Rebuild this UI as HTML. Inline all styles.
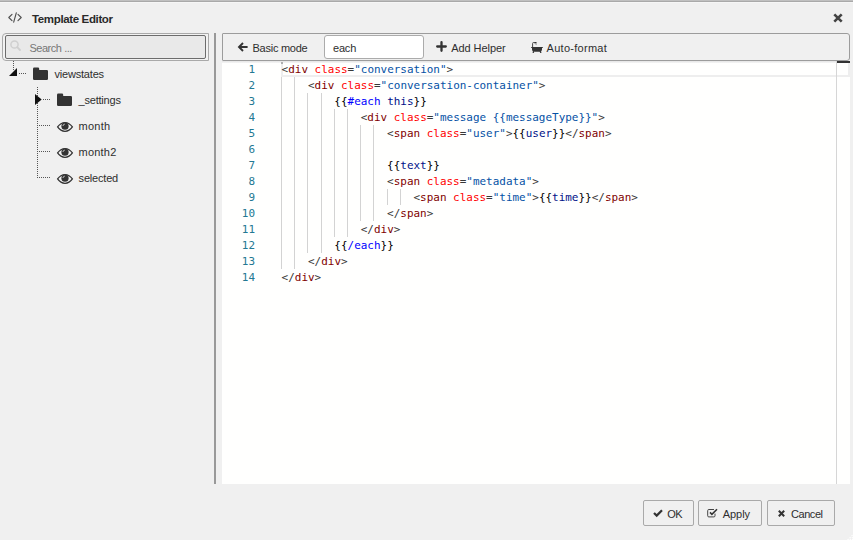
<!DOCTYPE html>
<html>
<head>
<meta charset="utf-8">
<title>Template Editor</title>
<style>
html,body{margin:0;padding:0;}
body{width:853px;height:540px;overflow:hidden;background:#f0f0f0;position:relative;
  font-family:"Liberation Sans",sans-serif;font-size:11px;color:#2e2e2e;}
.abs{position:absolute;}
#topborder{left:0;top:0;width:853px;height:3px;background:linear-gradient(#c0c0c0 0,#c0c0c0 1px,#a9a9a9 1px,#a9a9a9 2px,#f6f6f6 2px,#f6f6f6 3px);}
.t{position:absolute;white-space:nowrap;line-height:14px;height:14px;}
#title{left:32px;top:12px;font-weight:bold;font-size:11.5px;letter-spacing:-0.36px;color:#2a2a2a;}
/* search */
#searchOuter{left:2px;top:33px;width:205px;height:26px;border:1px solid #a9a9a9;border-radius:4px 0 0 4px;background:#f2f2f2;}
#searchInner{left:5px;top:35px;width:199px;height:22px;border:1px solid #6c6c6c;border-radius:2px;background:#e9e9e9;}
#searchText{left:29.5px;top:41px;color:#777;}
/* splitter */
#split{left:214px;top:33px;width:2px;height:451px;background:#999;}
/* toolbar */
#toolbar{left:222px;top:33px;width:626px;height:26px;border:1px solid #9c9c9c;border-radius:1px 3px 3px 1px;background:#f0f0f0;}
#helperInput{left:324px;top:35px;width:98px;height:22px;border:1px solid #ababab;border-radius:3px;background:#fff;}
/* editor */
#editor{left:222px;top:61px;width:628px;height:423px;background:#fffffe;overflow:hidden;
  font-family:"DejaVu Sans Mono","Liberation Mono",monospace;font-size:10.96px;}
.ln{position:absolute;margin-top:1px;left:0;width:33px;text-align:right;color:#237893;height:16px;line-height:16px;}
.cl{position:absolute;margin-top:1px;left:59.6px;height:16px;line-height:16px;white-space:pre;color:#000;}
.g{position:absolute;width:1px;background:#d3d3d3;}
.tg{color:#800000}.an{color:#ff0000}.av{color:#0451a5}.dl{color:#383838}.hb{color:#000}.kw{color:#0000ff}.vr{color:#001188}
/* tree */
.dotv{position:absolute;width:1px;background-image:linear-gradient(#555 50%,transparent 50%);background-size:1px 2px;}
.doth{position:absolute;height:1px;background-image:linear-gradient(90deg,#555 50%,transparent 50%);background-size:2px 1px;}
.tl{letter-spacing:-0.2px;color:#2e2e2e;}
/* buttons */
.btn{position:absolute;top:500px;height:24px;border:1px solid #a9a9a9;border-radius:2px;background:#f0f0f0;}
svg{position:absolute;overflow:visible;}
</style>
</head>
<body>
<div id="topborder" class="abs"></div>

<!-- title -->
<svg style="left:8px;top:12px" width="14" height="11" viewBox="0 0 14 11"><g fill="none" stroke="#505050" stroke-width="1.15" stroke-linecap="round" stroke-linejoin="round"><path d="M4 2.3 L0.8 5.5 L4 8.7"/><path d="M10 2.3 L13.2 5.5 L10 8.7"/><path d="M8.3 0.8 L5.7 10.2"/></g></svg>
<div id="title" class="t">Template Editor</div>
<svg style="left:832.6px;top:13.4px" width="10" height="10" viewBox="0 0 10 10"><path d="M1.3 1.3 L8.7 8.7 M8.7 1.3 L1.3 8.7" stroke="#444" stroke-width="2.6" stroke-linecap="butt" fill="none"/></svg>

<!-- search -->
<div id="searchOuter" class="abs"></div>
<div id="searchInner" class="abs"></div>
<svg style="left:10px;top:40px" width="11" height="11" viewBox="0 0 11 11"><circle cx="4.5" cy="4.5" r="3.6" fill="none" stroke="#cfcfcf" stroke-width="1.5"/><path d="M7.2 7.2 L10 10" stroke="#cfcfcf" stroke-width="1.8" stroke-linecap="round"/></svg>
<div id="searchText" class="t"><span id="sA" style="letter-spacing:-0.52px">Search</span> <span id="sB" style="letter-spacing:-0.55px">...</span></div>

<!-- tree -->
<div class="dotv" style="left:13px;top:61px;height:9px"></div>
<svg style="left:9px;top:67.5px" width="8" height="8" viewBox="0 0 8 8"><path d="M8 0 L8 8 L0 8 Z" fill="#111"/></svg>
<div class="doth" style="left:19px;top:73px;width:7px"></div>
<svg class="folder" style="left:33px;top:68px" width="15" height="12" viewBox="0 0 15 12"><path d="M1.3 -0.4 H5 Q6.2 -0.4 6.2 0.8 V1.9 H13.7 Q15 1.9 15 3.1 V10.8 Q15 12 13.7 12 H1.3 Q0 12 0 10.8 V0.9 Q0 -0.4 1.3 -0.4 Z" fill="#333"/></svg>
<div class="t tl" style="left:54.5px;top:67px">viewstates</div>

<div class="dotv" style="left:37px;top:87px;height:91px"></div>
<svg style="left:34.8px;top:94px" width="7" height="11" viewBox="0 0 7 11"><path d="M0 0 L6.7 5.5 L0 11 Z" fill="#111"/></svg>
<div class="doth" style="left:43px;top:99px;width:7px"></div>
<svg class="folder" style="left:57px;top:94px" width="15" height="12" viewBox="0 0 15 12"><path d="M1.3 -0.4 H5 Q6.2 -0.4 6.2 0.8 V1.9 H13.7 Q15 1.9 15 3.1 V10.8 Q15 12 13.7 12 H1.3 Q0 12 0 10.8 V0.9 Q0 -0.4 1.3 -0.4 Z" fill="#333"/></svg>
<div class="t tl" style="left:78.5px;top:93px">_settings</div>

<div class="doth" style="left:39px;top:125px;width:11px"></div>
<svg class="eye" style="left:56.5px;top:121px" width="16" height="11" viewBox="0 0 16 11"><path d="M0.6 5.9 Q3.6 1.5 8 1.5 Q12.4 1.5 15.4 5.9 Q12.4 10.3 8 10.3 Q3.6 10.3 0.6 5.9 Z" fill="none" stroke="#333" stroke-width="1.25"/><circle cx="8" cy="5.2" r="3.6" fill="#333"/><path d="M5.9 5 Q6.1 3.3 7.8 3.1" stroke="#f0f0f0" stroke-width="0.75" fill="none"/></svg>
<div class="t tl" style="left:78.6px;top:119px;letter-spacing:0.25px">month</div>

<div class="doth" style="left:39px;top:151px;width:11px"></div>
<svg class="eye" style="left:56.5px;top:147px" width="16" height="11" viewBox="0 0 16 11"><path d="M0.6 5.9 Q3.6 1.5 8 1.5 Q12.4 1.5 15.4 5.9 Q12.4 10.3 8 10.3 Q3.6 10.3 0.6 5.9 Z" fill="none" stroke="#333" stroke-width="1.25"/><circle cx="8" cy="5.2" r="3.6" fill="#333"/><path d="M5.9 5 Q6.1 3.3 7.8 3.1" stroke="#f0f0f0" stroke-width="0.75" fill="none"/></svg>
<div class="t tl" style="left:78.6px;top:145px;letter-spacing:0.2px">month2</div>

<div class="doth" style="left:39px;top:177px;width:11px"></div>
<svg class="eye" style="left:56.5px;top:173px" width="16" height="11" viewBox="0 0 16 11"><path d="M0.6 5.9 Q3.6 1.5 8 1.5 Q12.4 1.5 15.4 5.9 Q12.4 10.3 8 10.3 Q3.6 10.3 0.6 5.9 Z" fill="none" stroke="#333" stroke-width="1.25"/><circle cx="8" cy="5.2" r="3.6" fill="#333"/><path d="M5.9 5 Q6.1 3.3 7.8 3.1" stroke="#f0f0f0" stroke-width="0.75" fill="none"/></svg>
<div class="t tl" style="left:78.6px;top:171px">selected</div>

<!-- splitter -->
<div id="split" class="abs"></div>

<!-- toolbar -->
<div id="toolbar" class="abs"></div>
<svg style="left:238px;top:42px" width="10" height="10" viewBox="0 0 10 10"><path d="M9.6 5 H1.6 M5 1 L1 5 L5 9" fill="none" stroke="#333" stroke-width="1.9" stroke-linejoin="miter"/></svg>
<div class="t" style="left:252.5px;top:41px;letter-spacing:-0.25px">Basic mode</div>
<div id="helperInput" class="abs"></div>
<div class="t" style="left:333px;top:41px;letter-spacing:-0.2px">each</div>
<svg style="left:437px;top:42.3px" width="9" height="9" viewBox="0 0 9 9"><path d="M4.5 0.2 V8.8 M0.2 4.5 H8.8" stroke="#333" stroke-width="2.3" stroke-linecap="round" fill="none"/></svg>
<div class="t" style="left:451.2px;top:41px;letter-spacing:-0.06px">Add Helper</div>
<svg style="left:531px;top:42px" width="12" height="11" viewBox="0 0 12 11"><path d="M0.2 5 H11.8 V6.1 H0.2 Z M1 6 H11 V7.4 Q11 9.8 8.8 9.8 H3.2 Q1 9.8 1 7.4 Z M2 9.4 L1.5 11 H2.7 L3.5 9.4 Z M10 9.4 L10.5 11 H9.3 L8.5 9.4 Z" fill="#333"/><path d="M1.6 5 V1.5 Q1.6 0.5 2.6 0.5 H3.6" fill="none" stroke="#444" stroke-width="1"/><path d="M3.2 0.1 H5.4 L5.8 1.3 L3.6 1.6 Z" fill="#333"/><path d="M4 2 L5.9 1.4 L5.4 3.2 Z" fill="#999"/></svg>
<div class="t" style="left:546.6px;top:41px;letter-spacing:0.27px">Auto-format</div>

<!-- editor -->
<div id="editor" class="abs">
  <div class="abs" style="left:59px;top:0;width:565px;height:12px;border:2px solid #eeeeee"></div>
  <div class="abs" style="left:0;top:0;width:628px;height:2px;background:linear-gradient(#e4e4e4,#f6f6f6)"></div>
  <div class="abs" style="left:614px;top:0;width:1px;height:423px;background:#d6d6d6"></div>
  <div class="abs" style="left:615px;top:0;width:13px;height:2px;background:#333"></div>
  <div class="abs" style="left:59px;top:1px;width:2px;height:2px;background:#999;border-radius:1px"></div>
  <div id="guides"><div class="g" style="left:59px;top:16px;height:192px"></div><div class="g" style="left:72px;top:16px;height:192px"></div><div class="g" style="left:85px;top:32px;height:160px"></div><div class="g" style="left:99px;top:32px;height:160px"></div><div class="g" style="left:112px;top:48px;height:128px"></div><div class="g" style="left:125px;top:48px;height:128px"></div><div class="g" style="left:138px;top:64px;height:96px"></div><div class="g" style="left:151px;top:64px;height:96px"></div><div class="g" style="left:165px;top:128px;height:16px"></div><div class="g" style="left:178px;top:128px;height:16px"></div></div>
  <div class="ln" style="top:0">1</div>
  <div class="ln" style="top:16px">2</div>
  <div class="ln" style="top:32px">3</div>
  <div class="ln" style="top:48px">4</div>
  <div class="ln" style="top:64px">5</div>
  <div class="ln" style="top:80px">6</div>
  <div class="ln" style="top:96px">7</div>
  <div class="ln" style="top:112px">8</div>
  <div class="ln" style="top:128px">9</div>
  <div class="ln" style="top:144px">10</div>
  <div class="ln" style="top:160px">11</div>
  <div class="ln" style="top:176px">12</div>
  <div class="ln" style="top:192px">13</div>
  <div class="ln" style="top:208px">14</div>

  <div class="cl" style="top:0"><span class="dl">&lt;</span><span class="tg">div</span> <span class="an">class</span><span class="dl">=</span><span class="av">"conversation"</span><span class="dl">&gt;</span></div>
  <div class="cl" style="top:16px">    <span class="dl">&lt;</span><span class="tg">div</span> <span class="an">class</span><span class="dl">=</span><span class="av">"conversation-container"</span><span class="dl">&gt;</span></div>
  <div class="cl" style="top:32px">        <span class="hb">{{</span><span class="kw">#each</span> <span class="vr">this</span><span class="hb">}}</span></div>
  <div class="cl" style="top:48px">            <span class="dl">&lt;</span><span class="tg">div</span> <span class="an">class</span><span class="dl">=</span><span class="av">"message {{messageType}}"</span><span class="dl">&gt;</span></div>
  <div class="cl" style="top:64px">                <span class="dl">&lt;</span><span class="tg">span</span> <span class="an">class</span><span class="dl">=</span><span class="av">"user"</span><span class="dl">&gt;</span><span class="hb">{{</span><span class="vr">user</span><span class="hb">}}</span><span class="dl">&lt;/</span><span class="tg">span</span><span class="dl">&gt;</span></div>
  <div class="cl" style="top:80px"></div>
  <div class="cl" style="top:96px">                <span class="hb">{{</span><span class="vr">text</span><span class="hb">}}</span></div>
  <div class="cl" style="top:112px">                <span class="dl">&lt;</span><span class="tg">span</span> <span class="an">class</span><span class="dl">=</span><span class="av">"metadata"</span><span class="dl">&gt;</span></div>
  <div class="cl" style="top:128px">                    <span class="dl">&lt;</span><span class="tg">span</span> <span class="an">class</span><span class="dl">=</span><span class="av">"time"</span><span class="dl">&gt;</span><span class="hb">{{</span><span class="vr">time</span><span class="hb">}}</span><span class="dl">&lt;/</span><span class="tg">span</span><span class="dl">&gt;</span></div>
  <div class="cl" style="top:144px">                <span class="dl">&lt;/</span><span class="tg">span</span><span class="dl">&gt;</span></div>
  <div class="cl" style="top:160px">            <span class="dl">&lt;/</span><span class="tg">div</span><span class="dl">&gt;</span></div>
  <div class="cl" style="top:176px">        <span class="hb">{{</span><span class="kw">/each</span><span class="hb">}}</span></div>
  <div class="cl" style="top:192px">    <span class="dl">&lt;/</span><span class="tg">div</span><span class="dl">&gt;</span></div>
  <div class="cl" style="top:208px"><span class="dl">&lt;/</span><span class="tg">div</span><span class="dl">&gt;</span></div>
</div>

<!-- buttons -->
<div class="btn" style="left:643px;width:49px"></div>
<svg style="left:652.7px;top:509px" width="10" height="8" viewBox="0 0 10 8"><path d="M1 4 L3.7 6.6 L9 1.2" fill="none" stroke="#333" stroke-width="2.2"/></svg>
<div class="t" style="left:667.3px;top:507px;letter-spacing:-0.7px;font-size:11px">OK</div>

<div class="btn" style="left:698px;width:62px"></div>
<svg style="left:707px;top:508px" width="11" height="10" viewBox="0 0 11 10"><path d="M8 5.6 V7.8 Q8 8.9 6.9 8.9 H1.8 Q0.7 8.9 0.7 7.8 V2.6 Q0.7 1.5 1.8 1.5 H7" fill="none" stroke="#444" stroke-width="1"/><path d="M3 4.4 L4.9 6.3 L10 1.2" fill="none" stroke="#333" stroke-width="1.6"/></svg>
<div class="t" style="left:722.7px;top:507px;letter-spacing:-0.04px;font-size:11px">Apply</div>

<div class="btn" style="left:767px;width:66px"></div>
<svg style="left:778px;top:510.2px" width="7" height="7" viewBox="0 0 7 7"><path d="M0.8 0.8 L6.2 6.2 M6.2 0.8 L0.8 6.2" stroke="#333" stroke-width="2" fill="none"/></svg>
<div class="t" style="left:791px;top:507px;letter-spacing:-0.45px;font-size:11px">Cancel</div>

<!-- resize grip -->
<svg style="left:843px;top:530px" width="10" height="10" viewBox="0 0 10 10"><path d="M4.6 10 L10 4.6 M6.8 10 L10 6.8 M9 10 L10 9" stroke="#ffffff" stroke-width="1.1" stroke-dasharray="1.4 1.4" fill="none"/></svg>
</body>
</html>
